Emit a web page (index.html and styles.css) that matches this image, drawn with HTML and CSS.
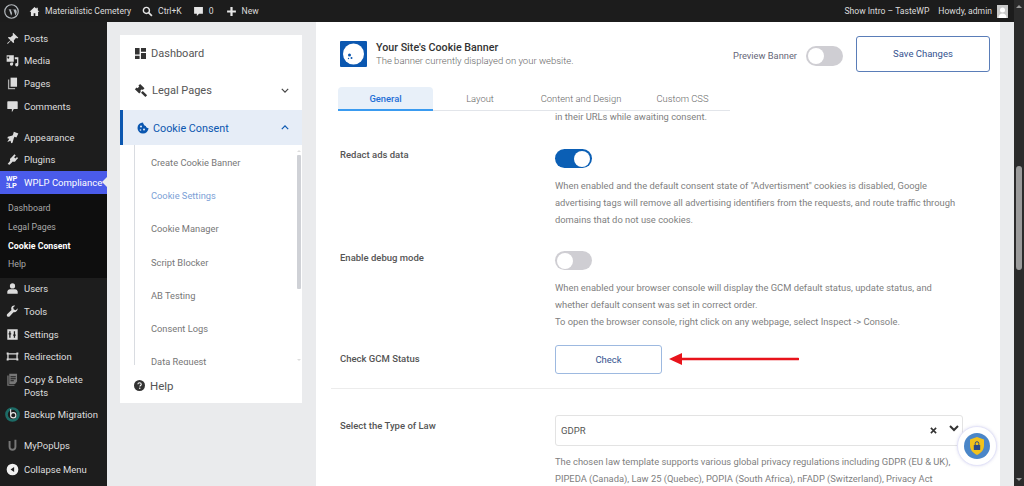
FILE: index.html
```html
<!DOCTYPE html>
<html lang="en">
<head>
<meta charset="utf-8">
<title>Cookie Settings</title>
<link rel="stylesheet" href="styles.css">
</head>
<body>
<header class="adminbar">
  <svg class="ab-wp" viewBox="0 0 20 20"><circle cx="10" cy="10" r="9" fill="none" stroke="#b4b9be" stroke-width="1.600"/><path d="M3.200 7.200h3.400l3 8.600 1.200-3.600-1.900-5h3.600l3 8.600 1.300-4.300c.5-1.800-.3-3.100-1-4.300h-1.500l-6-.1z" fill="#b4b9be"/></svg>
  <svg class="ab-ic home" viewBox="0 0 20 20"><path d="M10 2 1 10.500h2.500V18h5v-5h3v5h5v-7.500H19L16 7.600V3h-2.500v2.200z" fill="#e6e6e6"/></svg>
  <span class="ab-text site">Materialistic Cemetery</span>
  <svg class="ab-ic search" viewBox="0 0 20 20"><circle cx="8" cy="8" r="5.500" fill="none" stroke="#e6e6e6" stroke-width="2.600"/><path d="m12 12 6 6" stroke="#e6e6e6" stroke-width="3"/></svg>
  <span class="ab-text ctrl">Ctrl+K</span>
  <svg class="ab-ic bubble" viewBox="0 0 20 20"><path d="M2 2h16v12h-7l-4 4v-4H2z" fill="#e6e6e6"/></svg>
  <span class="ab-text zero">0</span>
  <svg class="ab-ic plus" viewBox="0 0 20 20"><path d="M8 2h4v6h6v4h-6v6H8v-6H2V8h6z" fill="#e6e6e6"/></svg>
  <span class="ab-text">New</span>
  <span class="ab-right">
    <span class="ab-text intro">Show Intro – TasteWP</span>
    <span class="ab-text howdy">Howdy, admin</span>
    <svg class="avatar" viewBox="0 0 11 13"><rect width="11" height="13" fill="#c9c9c9"/><circle cx="5.500" cy="5" r="2.500" fill="#fff"/><path d="M1.500 13c0-3 1.500-4.500 4-4.500s4 1.500 4 4.500z" fill="#fff"/></svg>
  </span>
</header>

<div class="shell">
  <nav class="sidebar">
    <a class="mi"><svg viewBox="0 0 20 20"><path d="M11 1l8 8-2 1-1.500-1L12 13l.5 3-1.500 1-3.500-4L3 18l-1 0 0-1 5-4.500-4-3.500 1-1.500 3 .5 4-3.500-1-1.500z"/></svg><span>Posts</span></a>
    <a class="mi"><svg viewBox="0 0 20 20"><path d="M1 2h11v10H1zm2.500 2a1.500 1.500 0 1 0 .01 0zM13.500 5H19v11.500a2.500 2.500 0 1 1-2-2.400V8h-3.500zM6 13h5v2.500A2.500 2.500 0 1 1 9 13.100z"/></svg><span>Media</span></a>
    <a class="mi"><svg viewBox="0 0 20 20"><path d="M7 1h10v14H7z"/><path d="M5 4v13h9v2H3V4z" opacity=".75"/></svg><span>Pages</span></a>
    <a class="mi"><svg viewBox="0 0 20 20"><path d="M3 2h14a1 1 0 0 1 1 1v10a1 1 0 0 1-1 1h-5l-3 5v-5H3a1 1 0 0 1-1-1V3a1 1 0 0 1 1-1z"/></svg><span>Comments</span></a>
    <div class="mi-gap"></div>
    <a class="mi"><svg viewBox="0 0 20 20"><path d="M12 1l7 3-3 6-3-1-1 2-2 7-2 1-1-4-5 2 3-5-3-1 1-2 7-2 1-2z"/></svg><span>Appearance</span></a>
    <a class="mi"><svg viewBox="0 0 20 20"><path d="M13 2l2 2-2.500 2.500 2 2L17 6l1.500 2-3 3c-1 2-3 3-5 2l-5 5-3-1 4-5c-1-2 0-4 2-5z"/></svg><span>Plugins</span></a>
    <a class="mi current"><span class="wplp-logo">WP<br>⁝LP</span><span>WPLP Compliance</span></a>
    <div class="submenu">
      <a>Dashboard</a>
      <a>Legal Pages</a>
      <a class="on">Cookie Consent</a>
      <a>Help</a>
    </div>
    <a class="mi"><svg viewBox="0 0 20 20"><circle cx="10" cy="6" r="4"/><path d="M2 18v-3c0-2 2-4 4-4h8c2 0 4 2 4 4v3z"/></svg><span>Users</span></a>
    <a class="mi"><svg viewBox="0 0 20 20"><path d="M18 5l-3 3-3-1-1-3 3-3c-3-1-6 1-6 4 0 1 0 2 .5 2.500L2 14c-1 1-1 2.500 0 3.500s2.500 1 3.500 0l6-6.500c3 1 7-2 6.500-6z"/></svg><span>Tools</span></a>
    <a class="mi"><svg viewBox="0 0 20 20"><path d="M2 2h16v16H2zm3 3v3H4v2h1v5h2v-5h1V8H7V5zm7 0v5h-1v2h1v3h2v-3h1v-2h-1V5z" fill-rule="evenodd"/></svg><span>Settings</span></a>
    <a class="mi"><svg viewBox="0 0 20 20"><path d="M1 4h3v1h12V4h3v3h-1v6h1v3h-3v-1H4v1H1v-3h1V7H1zm3 3v6h12V7z" fill-rule="evenodd"/></svg><span>Redirection</span></a>
    <a class="mi tall"><svg viewBox="0 0 20 20" class="dim"><path d="M5 1h12v12l-3 4H5zM7 5h8v1.500H7zm0 3h8v1.500H7zm0 3h5v1.500H7z" fill-rule="evenodd"/><path d="M2 4h2v14h9v1.500H2z"/></svg><span>Copy &amp; Delete<br>Posts</span></a>
    <a class="mi backup"><svg viewBox="0 0 20 20"><circle cx="10" cy="10" r="8" fill="none" stroke="#1d6b66" stroke-width="3.600"/><circle cx="11" cy="11" r="3.500" fill="none" stroke="#e6e6e6" stroke-width="1.500"/><path d="M7.500 3v8" stroke="#e6e6e6" stroke-width="1.500"/></svg><span>Backup Migration</span></a>
    <a class="mi popups"><svg viewBox="0 0 20 20" class="dim"><path d="M4 3h3v9c0 2 1 3 3 3s3-1 3-3V1h3v11c0 4-2.500 6-6 6s-6-2-6-6z"/></svg><span>MyPopUps</span></a>
    <a class="mi collapse"><svg viewBox="0 0 20 20"><path d="M10 1a9 9 0 1 1 0 18 9 9 0 0 1 0-18zm2.500 5L7 10l5.500 4z" fill="#f0f0f0" fill-rule="evenodd"/></svg><span>Collapse Menu</span></a>
  </nav>

  <div class="workspace">
    <aside class="panel">
      <a class="pnl-item"><svg class="pnl-ic" viewBox="0 0 12 12"><path d="M0 0h5v7H0zM6.500 0H12v4H6.500zM6.500 5.500H12V12H6.500zM0 8.500h5V12H0z" fill="#333"/></svg>Dashboard</a>
      <a class="pnl-item legal"><svg class="pnl-ic gavel" viewBox="0 0 16 16"><path d="M7 1l5 5-2 2-1-1-2 2 1 1-2 2-5-5 2-2 1 1 2-2-1-1zM10 9l5 5-2 2-5-5z" fill="#333"/></svg>Legal Pages<svg class="chev" viewBox="0 0 10 6"><path d="M1 1l4 4 4-4" fill="none" stroke="#444" stroke-width="1.500"/></svg></a>
      <a class="pnl-item active"><svg class="pnl-ic cookie" viewBox="0 0 12 12"><path d="M6 .5a5.500 5.500 0 1 0 5.500 5.500C10 6 9 5.500 8.800 4 7.400 4 6.300 2 6 .5z" fill="#0b57b0"/><circle cx="4" cy="4.500" r="1" fill="#e6edf7"/><circle cx="7" cy="7.500" r="1" fill="#e6edf7"/><circle cx="3.500" cy="8" r=".8" fill="#e6edf7"/></svg>Cookie Consent<svg class="chev" viewBox="0 0 10 6"><path d="M1 5l4-4 4 4" fill="none" stroke="#0b57b0" stroke-width="1.500"/></svg></a>
      <div class="sublist">
        <div class="sub-items">
          <a>Create Cookie Banner</a>
          <a class="sel">Cookie Settings</a>
          <a>Cookie Manager</a>
          <a>Script Blocker</a>
          <a>AB Testing</a>
          <a>Consent Logs</a>
          <a>Data Request</a>
        </div>
        <div class="mini-scroll"><i class="up"></i><b></b><i class="down"></i></div>
      </div>
      <a class="pnl-help"><svg viewBox="0 0 12 12"><circle cx="6" cy="6" r="6" fill="#333"/><path d="M4.200 4.600C4.300 3.500 5 3 6 3c1.100 0 1.900.6 1.900 1.600 0 1.400-1.500 1.300-1.500 2.500" fill="none" stroke="#fff" stroke-width="1.200"/><circle cx="6.300" cy="9" r=".8" fill="#fff"/></svg>Help</a>
    </aside>

    <main class="main">
      <div class="sticky">
        <div class="head-row">
          <svg class="banner-logo" viewBox="0 0 27 26"><rect width="27" height="26" rx="1" fill="#0b57b0"/><circle cx="13.500" cy="13" r="10.500" fill="#fff"/><circle cx="9.500" cy="14" r="1.500" fill="#0b57b0"/><circle cx="11.500" cy="17" r="1" fill="#0b57b0"/><circle cx="8.500" cy="17.500" r=".7" fill="#0b57b0"/></svg>
          <div class="head-copy">
            <div class="title">Your Site's Cookie Banner</div>
            <div class="sub">The banner currently displayed on your website.</div>
          </div>
          <div class="head-actions">
            <span class="preview">Preview Banner</span>
            <span class="toggle off big"></span>
            <a class="btn save">Save Changes</a>
          </div>
        </div>
        <div class="tabs">
          <a class="tab sel">General</a>
          <a class="tab t2">Layout</a>
          <a class="tab t3">Content and Design</a>
          <a class="tab t4">Custom CSS</a>
        </div>
      </div>
      <div class="scroll">
        <div class="row first"><div class="lab"></div><p class="desc">in their URLs while awaiting consent.</p></div>
        <div class="row redact">
          <div class="lab">Redact ads data</div>
          <div class="field">
            <span class="toggle on"></span>
            <p class="desc">When enabled and the default consent state of "Advertisment" cookies is disabled, Google<br>advertising tags will remove all advertising identifiers from the requests, and route traffic through<br>domains that do not use cookies.</p>
          </div>
        </div>
        <div class="row debug">
          <div class="lab">Enable debug mode</div>
          <div class="field">
            <span class="toggle off"></span>
            <p class="desc">When enabled your browser console will display the GCM default status, update status, and<br>whether default consent was set in correct order.<br>To open the browser console, right click on any webpage, select Inspect -&gt; Console.</p>
          </div>
        </div>
        <div class="row check">
          <div class="lab">Check GCM Status</div>
          <div class="field"><a class="btn chk">Check</a></div>
          <svg class="arrow" viewBox="0 0 130 12"><path d="M0 6l13-6v4.700h116a1.300 1.300 0 0 1 0 2.600H13V12z" fill="#e8131b"/></svg>
        </div>
        <hr class="rule">
        <div class="row law">
          <div class="lab">Select the Type of Law</div>
          <div class="field">
            <div class="select"><span>GDPR</span><svg class="x" viewBox="0 0 8 8"><path d="M1 1l6 6M7 1L1 7" stroke="#333" stroke-width="1.800"/></svg><svg class="caret" viewBox="0 0 10 7"><path d="M1 1l4 4 4-4" fill="none" stroke="#333" stroke-width="2"/></svg></div>
            <p class="desc">The chosen law template supports various global privacy regulations including GDPR (EU &amp; UK),<br>PIPEDA (Canada), Law 25 (Quebec), POPIA (South Africa), nFADP (Switzerland), Privacy Act</p>
          </div>
        </div>
      </div>
      <div class="float-badge"><svg viewBox="0 0 30 30"><circle cx="15" cy="15" r="13" fill="#4a86c8"/><path d="M15 6l7 2.500v6c0 4.500-3 7.500-7 9.500-4-2-7-5-7-9.500v-6z" fill="#f2c21b"/><rect x="11.800" y="14" width="6.400" height="5" rx=".6" fill="#2c4a87"/><path d="M13.200 14v-1.500a1.800 1.800 0 0 1 3.600 0V14" fill="none" stroke="#2c4a87" stroke-width="1"/></svg></div>
    </main>
    <div class="page-scroll"><i class="up"></i><b></b><i class="down"></i></div>
  </div>
</div>
</body>
</html>
```
FILE: styles.css
```css
* { box-sizing: border-box; }
html, body { margin: 0; height: 100%; overflow: hidden; }
body { width: 1024px; height: 486px; display: flex; flex-direction: column; background: #eaebed; font-family: Roboto, sans-serif; }
a { display: block; }
p { margin: 0; }

.adminbar { height: 22px; flex: none; background: #1c1c1c; display: flex; align-items: center; padding-right: 16px; }
.ab-text { font: 8.600px/22px Roboto, sans-serif; color: #dcdcdc; white-space: nowrap; }
.ab-wp { width: 15px; height: 15px; margin-left: 4px; }
.ab-ic { width: 11px; height: 11px; flex: none; }
.home { margin-left: 10px; margin-right: 5px; }
.search { margin-left: 11px; margin-right: 5px; }
.bubble { margin-left: 11px; margin-right: 5px; }
.plus { margin-left: 12px; margin-right: 5px; }
.ab-right { margin-left: auto; display: flex; align-items: center; }
.howdy { margin-left: 9px; margin-right: 5px; }
.avatar { width: 11px; height: 13px; }

.shell { flex: 1; display: flex; min-height: 0; }
.sidebar { width: 107px; flex: none; background: #1d1d1d; padding-top: 5px; }
.mi { height: 22.600px; display: flex; align-items: center; color: #dedede; font-size: 9.500px; line-height: 13px; white-space: nowrap; }
.mi svg { width: 13px; height: 13px; margin-left: 6px; margin-right: 5px; flex: none; fill: #dcdcdc; }
.mi svg.dim { fill: #777; }
.mi-gap { height: 8.500px; }
.current { background: #4a5bea; color: #fff; position: relative; }
.current::after { content: ""; position: absolute; right: 0; top: 6px; border: 5px solid transparent; border-right-color: #eaebed; border-left: 0; }
.wplp-logo { width: 13px; margin-left: 6px; margin-right: 5px; font: 700 7.500px/7px Roboto, sans-serif; color: #fff; }
.submenu { background: #0e0e0e; height: 84px; padding-top: 5.500px; }
.submenu a { height: 18.700px; line-height: 18.700px; padding-left: 8px; color: #a9a9a9; font-size: 8.800px; }
.submenu a.on { color: #fff; font-weight: 700; }
.tall { height: 35px; align-items: flex-start; padding-top: 5px; }
.backup { height: 23px; }
.backup svg { width: 15px; height: 15px; margin-left: 5px; margin-right: 4px; }
.popups { margin-top: 7px; height: 24px; }
.collapse { height: 24px; }

.workspace { flex: 1; display: flex; min-width: 0; padding-left: 13px; }
.panel { width: 182px; height: 368px; margin-top: 13px; flex: none; background: #fff; color: #555; }
.pnl-item { display: flex; align-items: center; font-size: 11px; color: #555; position: relative; height: 36px; padding-left: 15px; }
.pnl-ic { width: 11px; height: 11px; margin-right: 5px; flex: none; }
.legal { padding-left: 14px; height: 39px; padding-bottom: 1px; }
.gavel { width: 14px; height: 14px; margin-right: 4px; }
.chev { width: 8px; height: 5px; position: absolute; right: 13px; top: 50%; margin-top: -3px; }
.active { height: 35px; background: #e6edf7; color: #0b57b0; border-left: 3px solid #0b57b0; padding-left: 14px; padding-top: 1px; font-size: 10.800px; }
.cookie { width: 12px; height: 12px; margin-right: 4px; }
.sublist { height: 220px; position: relative; overflow: hidden; }
.sub-items { height: 220px; margin-left: 14px; border-left: 1px solid #d9dce1; padding-left: 16px; padding-top: 1px; overflow: hidden; }
.sub-items a { height: 33.200px; line-height: 33.200px; font-size: 9.300px; color: #777; }
.sub-items a.sel { color: #7c9fd6; position: relative; }
.sub-items a.sel::before { content: ""; position: absolute; left: -17px; top: 0; bottom: 0; width: 1px; background: #3f74cc; }
.mini-scroll { position: absolute; right: 1px; top: 0; bottom: 0; width: 4px; display: flex; flex-direction: column; align-items: center; }
.mini-scroll b { display: block; width: 4px; height: 134px; margin-top: 3px; background: #cfd1d6; border-radius: 1px; }
.mini-scroll i { display: block; width: 0; height: 0; border: 2px solid transparent; }
.mini-scroll .up { margin-top: 3px; border-bottom-color: #ddd; }
.mini-scroll .down { margin-top: auto; margin-bottom: 2px; border-top-color: #ddd; }
.pnl-help { display: flex; align-items: center; height: 41px; padding-left: 14px; font-size: 11.500px; color: #555; }
.pnl-help svg { width: 11px; height: 11px; margin-right: 5px; }

.main { width: 684px; margin-left: 14px; background: #fff; flex: none; position: relative; display: flex; flex-direction: column; overflow: hidden; }
.sticky { height: 89px; flex: none; padding: 14px 10px 0 22px; }
.head-row { display: flex; align-items: flex-start; height: 51px; padding-left: 2px; }
.banner-logo { width: 27px; height: 26px; margin-top: 5px; flex: none; }
.head-copy { margin-left: 9px; margin-top: 5px; }
.title { font: 500 10.700px/13px Roboto, sans-serif; color: #333; }
.sub { font: 300 9.500px/13px Roboto, sans-serif; color: #666; }
.head-actions { margin-left: auto; display: flex; align-items: flex-start; }
.preview { font-size: 9.300px; color: #667; margin-top: 14px; margin-right: 9px; }
.btn { border: 1px solid #9db9e0; border-radius: 3px; text-align: center; color: #35538f; font-size: 9.500px; }
.save { width: 134px; height: 36px; line-height: 34px; margin-left: 13px; border-color: #5a7db8; }
.toggle { display: block; width: 37px; height: 19px; border-radius: 10px; position: relative; flex: none; }
.toggle::after { content: ""; position: absolute; top: 1.500px; width: 16px; height: 16px; border-radius: 50%; background: #fff; }
.toggle.on { background: #0b5fb5; }
.toggle.on::after { right: 2px; }
.toggle.off { background: #cfced3; }
.toggle.off::after { left: 2px; }
.toggle.big { height: 20px; margin-top: 10px; }
.tabs { display: flex; width: 392px; height: 24px; border-bottom: 1px solid #e2e5ea; }
.tab { text-align: center; line-height: 24px; font-size: 9.400px; color: #666; font-weight: 300; }
.tab.sel { width: 95px; background: #e8f0f9; color: #1f6fd6; font-weight: 500; border-bottom: 2px solid #3a9bf0; border-radius: 4px 4px 0 0; height: 24px; }
.t2 { width: 94px; }
.t3 { width: 108px; }
.t4 { width: 95px; }

.scroll { flex: 1; min-height: 0; overflow: hidden; padding: 0 20px 0 24px; }
.row { display: flex; position: relative; }
.lab { width: 215px; flex: none; font-size: 9.500px; font-weight: 500; color: #555; line-height: 14px; }
.field { flex: 1; min-width: 0; }
.desc { font-size: 9.350px; line-height: 17px; color: #808080; white-space: nowrap; }
.first { height: 38px; }
.first .desc { margin-top: -3px; }
.redact { height: 102px; }
.redact .lab { margin-top: -1px; }
.redact .toggle { margin-bottom: 9px; }
.debug { height: 94px; }
.debug .toggle { margin-bottom: 9px; }
.check { height: 43px; }
.check .lab { margin-top: 7px; }
.chk { width: 107px; height: 29px; line-height: 28px; }
.arrow { position: absolute; left: 329px; top: 8px; width: 130px; height: 12px; }
.rule { border: 0; border-top: 1px solid #ececec; margin: 0 0 26px -9px; width: 649px; }
.law .lab { margin-top: 4px; }
.select { width: 408px; height: 31px; border: 1px solid #e3e3e3; border-radius: 3px; display: flex; align-items: center; padding-left: 5px; font-size: 9.500px; color: #555; margin-bottom: 7px; }
.select span { flex: 1; }
.x { width: 7px; height: 7px; margin-right: 12px; }
.caret { width: 10px; height: 7px; margin-right: 3px; margin-top: -4px; }

.float-badge { position: absolute; left: 641px; top: 404px; width: 40px; height: 40px; border-radius: 50%; background: #fff; border: 1px solid #e4e4f8; box-shadow: 0 0 3px rgba(120,120,200,.25); display: flex; align-items: center; justify-content: center; }
.float-badge svg { width: 30px; height: 30px; }

.page-scroll { width: 10px; margin-left: 14px; flex: none; background: #2b2b2b; display: flex; flex-direction: column; align-items: center; margin-top: -22px; position: relative; }
.page-scroll b { display: block; width: 6px; height: 104px; margin-top: 158px; background: #9b9b9b; border-radius: 3px; }
.page-scroll i { display: block; width: 0; height: 0; border: 3px solid transparent; }
.page-scroll .up { margin-top: 2px; border-bottom-color: #9a9a9a; }
.page-scroll .down { margin-top: auto; margin-bottom: 2px; border-top-color: #9a9a9a; }
```
